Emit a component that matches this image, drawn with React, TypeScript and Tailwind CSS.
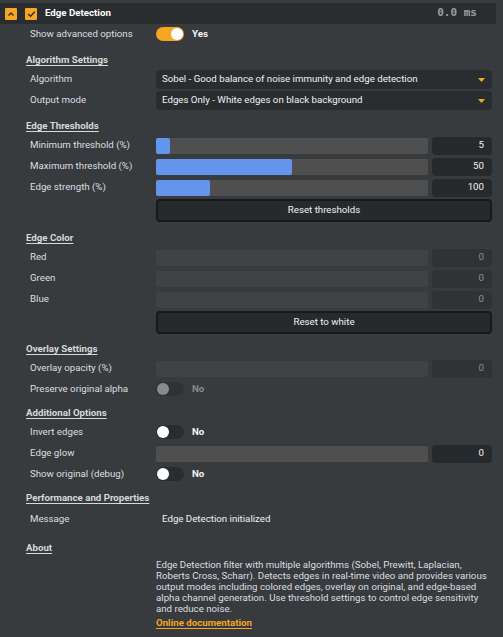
import React from "react";

type Fill = { value: number; fill: number };

function Row({ label, children, className = "" }: { label: string; children?: React.ReactNode; className?: string }) {
  return (
    <div className={`flex items-center h-[21px] ${className}`}>
      <div className="w-[130px] pl-[4px] shrink-0 whitespace-nowrap">{label}</div>
      <div className="flex-1 flex items-center min-w-0">{children}</div>
    </div>
  );
}

function Section({ title, className = "mt-[7px]" }: { title: string; className?: string }) {
  return (
    <div className={`h-[17px] flex items-center font-bold underline underline-offset-2 text-[#d6d8da] ${className}`}>
      {title}
    </div>
  );
}

function Select({ text }: { text: string }) {
  return (
    <div className="flex-1 h-[19px] rounded-[4px] bg-[#2a2d30] flex items-center pl-[6px] pr-[7px] text-[#f0f0f0]">
      <span className="flex-1 truncate">{text}</span>
      <svg width="7" height="4" viewBox="0 0 7 4">
        <polygon points="0,0 7,0 3.5,4" fill="#f5a623" />
      </svg>
    </div>
  );
}

function Slider({ value, fill, disabled }: Fill & { disabled?: boolean }) {
  return (
    <div className="flex-1 flex items-center gap-[4px]">
      <div
        className={`flex-1 h-[16px] rounded-[2px] overflow-hidden ${disabled ? "bg-[#404345]" : "bg-[#4f4f4f]"}`}
      >
        {fill > 0 && <div className="h-full bg-[#6495ed] rounded-r-[2px]" style={{ width: `${fill}%` }} />}
      </div>
      <div
        className={`w-[60px] h-[18px] rounded-[4px] flex items-center justify-end pr-[8px] ${
          disabled ? "bg-[#303336] text-[#8c9093]" : "bg-[#272a2c] text-[#f2f2f2]"
        }`}
      >
        {value}
      </div>
    </div>
  );
}

function Toggle({ on, disabled }: { on?: boolean; disabled?: boolean }) {
  const track = on ? "bg-[#f5a623] justify-end" : disabled ? "bg-[#303336] justify-start" : "bg-[#2a2d30] justify-start";
  const knob = disabled ? "bg-[#8a8a8a]" : "bg-white";
  return (
    <div className="flex items-center">
      <div className={`w-[28px] h-[14px] rounded-full flex items-center px-[1px] ${track}`}>
        <div className={`w-[12px] h-[12px] rounded-full ${knob}`} />
      </div>
      <span className={`ml-[8px] font-bold ${disabled ? "text-[#8a8a8a]" : "text-[#f4f4f4]"}`}>
        {on ? "Yes" : "No"}
      </span>
    </div>
  );
}

function Button({ label }: { label: string }) {
  return (
    <div className="ml-[130px] mt-[1px] h-[23px] rounded-[4px] border-2 border-[#17191a] bg-[#272a2c] flex items-center justify-center text-[#f0f0f0]">
      {label}
    </div>
  );
}

const about = [
  "Edge Detection filter with multiple algorithms (Sobel, Prewitt, Laplacian,",
  "Roberts Cross, Scharr). Detects edges in real-time video and provides various",
  "output modes including colored edges, overlay on original, and edge-based",
  "alpha channel generation. Use threshold settings to control edge sensitivity",
  "and reduce noise.",
];

export default function App() {
  return (
    <div className="w-[503px] h-[637px] overflow-hidden bg-[#373b3e] pt-[3px] text-[9.7px] text-[#dcdee0] font-['Roboto',sans-serif]">
      {/* filter header */}
      <div className="h-[21px] mr-[7px] bg-[#2a2d30] flex items-center pl-[5px]">
        <div className="w-[12px] h-[12px] rounded-[1px] bg-[#f5a623] flex items-center justify-center">
          <svg width="8" height="8" viewBox="0 0 8 8">
            <path d="M1.5 5.5 L4 3 L6.5 5.5" stroke="#2a2d30" strokeWidth="1.4" fill="none" />
          </svg>
        </div>
        <div className="ml-[8px] w-[12px] h-[12px] rounded-[1px] bg-[#f5a623] flex items-center justify-center">
          <svg width="9" height="8" viewBox="0 0 9 8">
            <path d="M1.2 4 L3.5 6.2 L7.8 1.8" stroke="#2a2d30" strokeWidth="1.5" fill="none" />
          </svg>
        </div>
        <span className="ml-[8px] font-bold text-white">Edge Detection</span>
        <span className="ml-auto mr-[19px] text-[11px] font-['DejaVu_Sans_Mono',monospace] font-bold text-[#9a9ea1]">
          0.0 ms
        </span>
      </div>

      <div className="pl-[26px] pr-[11px]">
        <Row label="Show advanced options">
          <Toggle on />
        </Row>

        <Section title="Algorithm Settings" />
        <Row label="Algorithm">
          <Select text="Sobel - Good balance of noise immunity and edge detection" />
        </Row>
        <Row label="Output mode">
          <Select text="Edges Only - White edges on black background" />
        </Row>

        <Section title="Edge Thresholds" />
        <Row label="Minimum threshold (%)">
          <Slider value={5} fill={5} />
        </Row>
        <Row label="Maximum threshold (%)">
          <Slider value={50} fill={50} />
        </Row>
        <Row label="Edge strength (%)">
          <Slider value={100} fill={20} />
        </Row>
        <Button label="Reset thresholds" />

        <Section title="Edge Color" className="mt-[8px]" />
        <Row label="Red">
          <Slider value={0} fill={0} disabled />
        </Row>
        <Row label="Green">
          <Slider value={0} fill={0} disabled />
        </Row>
        <Row label="Blue">
          <Slider value={0} fill={0} disabled />
        </Row>
        <Button label="Reset to white" />

        <Section title="Overlay Settings" className="mt-[7px]" />
        <Row label="Overlay opacity (%)">
          <Slider value={0} fill={0} disabled />
        </Row>
        <Row label="Preserve original alpha">
          <Toggle disabled />
        </Row>

        <Section title="Additional Options" className="mt-[5px]" />
        <Row label="Invert edges">
          <Toggle />
        </Row>
        <Row label="Edge glow">
          <Slider value={0} fill={0} />
        </Row>
        <Row label="Show original (debug)">
          <Toggle />
        </Row>

        <Section title="Performance and Properties" className="mt-[5px]" />
        <Row label="Message" className="mt-[2px]">
          <span className="pl-[6px] text-[#f0f0f0]">Edge Detection initialized</span>
        </Row>

        <Section title="About" className="mt-[10px]" />
        <div className="ml-[130px] mt-[2px] leading-[11px] text-[#dcdee0]">
          {about.map((line) => (
            <div key={line} className="whitespace-nowrap">
              {line}
            </div>
          ))}
        </div>
        <div className="ml-[130px] mt-[3px] leading-[11px] font-bold underline underline-offset-2 text-[#f5a623]">
          Online documentation
        </div>
      </div>
    </div>
  );
}
